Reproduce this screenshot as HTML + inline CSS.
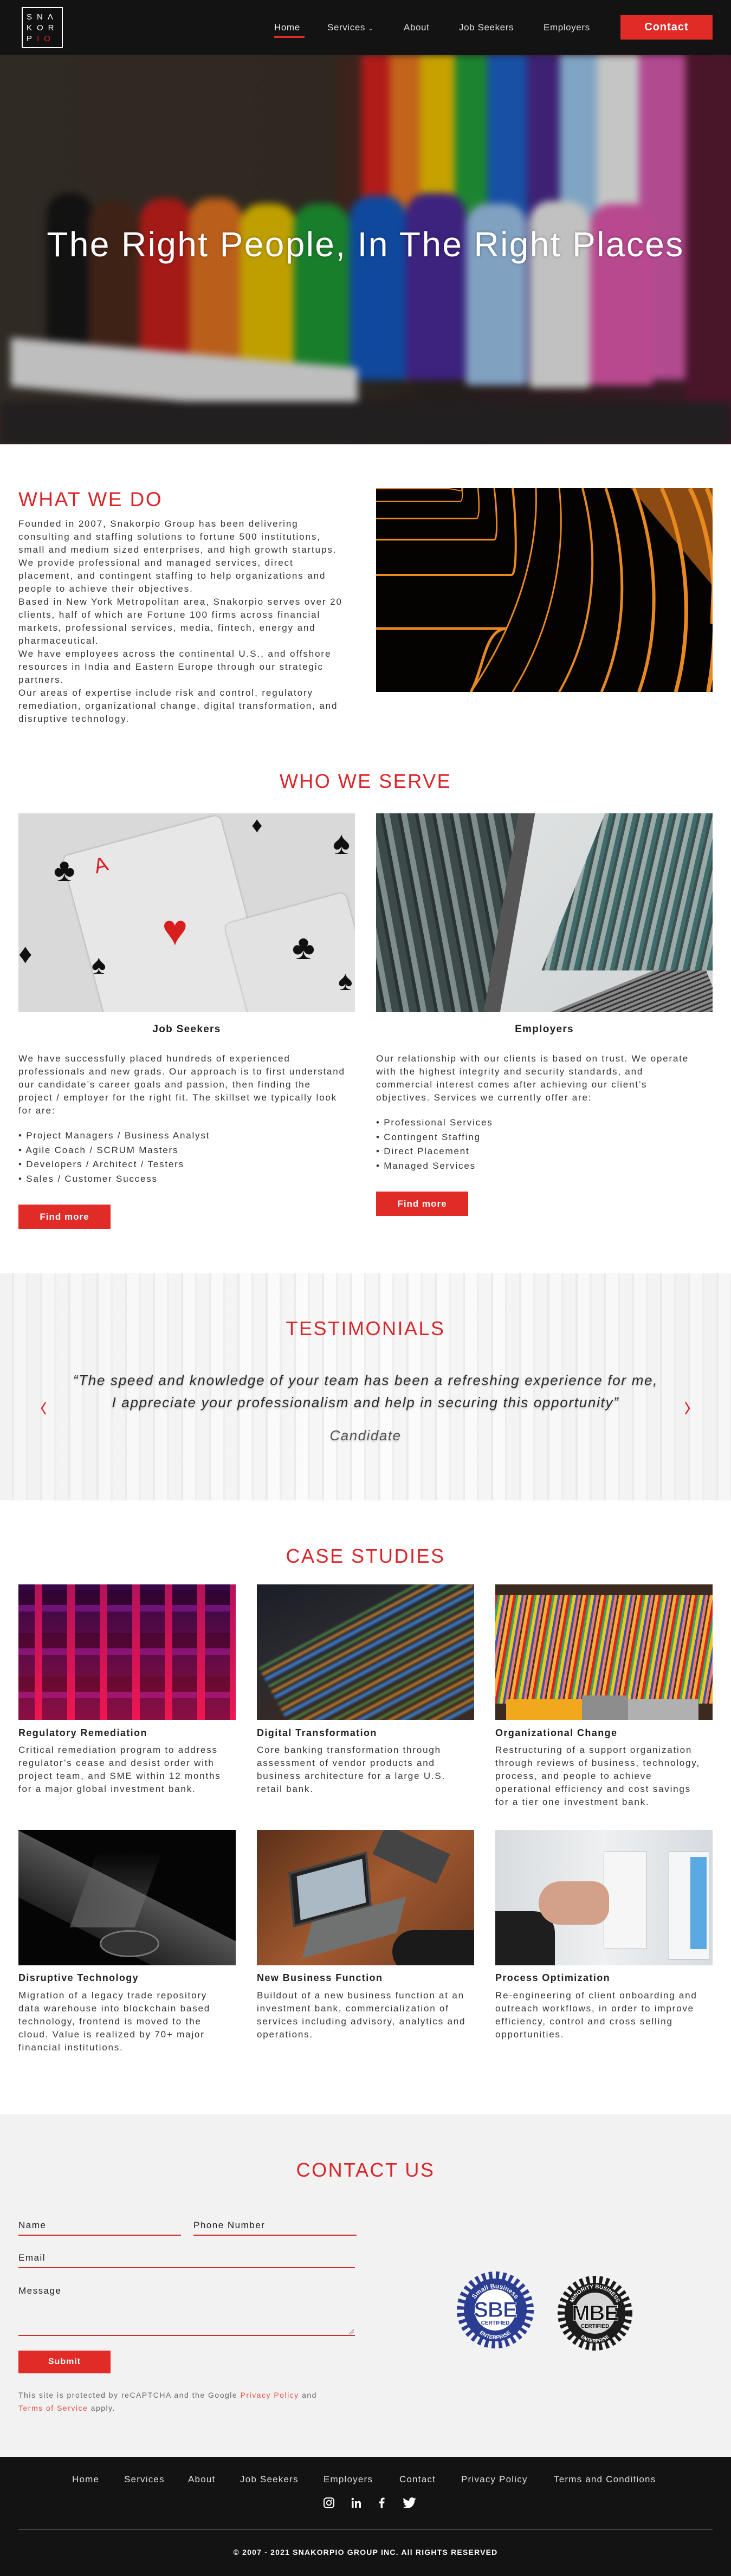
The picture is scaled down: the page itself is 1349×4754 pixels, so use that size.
<!DOCTYPE html>
<html><head><meta charset="utf-8">
<style>
*{margin:0;padding:0;box-sizing:border-box}
html,body{width:1349px;height:4754px;overflow:hidden;background:#fff}
body{position:relative;font-family:"Liberation Sans",Arial,sans-serif;color:#333}
.a{position:absolute}
.nw{white-space:nowrap}
.h2{font-size:36px;letter-spacing:2.5px;color:#d9262a;font-weight:normal;white-space:nowrap}
.txt{font-size:17px;letter-spacing:1.8px;line-height:24px;color:#333;white-space:nowrap}
.btn{background:#e02b27;color:#fff;font-weight:bold;font-size:17px;letter-spacing:1px;text-align:center}
.cs-t{font-size:18px;font-weight:bold;letter-spacing:1.4px;color:#222;white-space:nowrap}
.blur{filter:blur(7px)}
</style></head><body>

<!-- HEADER -->
<div class="a" style="left:0;top:0;width:1349px;height:101px;background:#131313"></div>
<div class="a" style="left:40px;top:13px;width:76px;height:76px;border:2px solid #fff;background:#111"></div>
<div class="a nw" style="left:49px;top:22px;color:#fff;font-size:15px;line-height:20px;letter-spacing:9px">SN<span style="letter-spacing:0">Λ</span><br>KOR<br>P<span style="color:#d9262a">IO</span></div>
<div class="a nw" style="left:506px;top:41px;font-size:17px;color:#eee;letter-spacing:0.6px">Home</div>
<div class="a" style="left:506px;top:66px;width:56px;height:4px;background:#e02b27"></div>
<div class="a nw" style="left:604px;top:41px;font-size:17px;color:#ddd;letter-spacing:0.6px">Services <span style="font-size:11px">&#8964;</span></div>
<div class="a nw" style="left:745px;top:41px;font-size:17px;color:#ddd;letter-spacing:0.6px">About</div>
<div class="a nw" style="left:847px;top:41px;font-size:17px;color:#ddd;letter-spacing:0.6px">Job Seekers</div>
<div class="a nw" style="left:1003px;top:41px;font-size:17px;color:#ddd;letter-spacing:0.6px">Employers</div>
<div class="a btn" style="left:1145px;top:28px;width:170px;height:45px;line-height:45px;font-size:20px">Contact</div>

<!-- HERO -->
<div class="a" style="left:0;top:101px;width:1349px;height:719px;overflow:hidden;background:linear-gradient(90deg,#3b342c 0%,#3a3129 45%,#2c2522 60%,#4a1f2e 100%)">
  <div class="a blur" style="left:0;top:0;width:1349px;height:719px">
    <div class="a" style="left:620px;top:0;width:50px;height:600px;background:#4a2b22"></div>
    <div class="a" style="left:667px;top:0;width:54px;height:600px;background:#d8231f"></div>
    <div class="a" style="left:719px;top:0;width:58px;height:600px;background:#ef7a20"></div>
    <div class="a" style="left:775px;top:0;width:64px;height:600px;background:#f2c500"></div>
    <div class="a" style="left:839px;top:0;width:62px;height:600px;background:#23a23b"></div>
    <div class="a" style="left:899px;top:0;width:74px;height:600px;background:#1d62c9"></div>
    <div class="a" style="left:972px;top:0;width:62px;height:600px;background:#4b2a8e"></div>
    <div class="a" style="left:1033px;top:0;width:70px;height:600px;background:#9cc9ef"></div>
    <div class="a" style="left:1102px;top:0;width:78px;height:600px;background:#f1f1f1"></div>
    <div class="a" style="left:1179px;top:0;width:86px;height:600px;background:#d95bb0"></div>
    <div class="a" style="left:1265px;top:0;width:90px;height:719px;background:#5a1a33"></div>
    <div class="a" style="left:86px;top:255px;width:86px;height:320px;background:#161616;border-radius:40px 40px 6px 6px"></div>
    <div class="a" style="left:163px;top:270px;width:92px;height:310px;background:#4d2a1c;border-radius:40px 40px 6px 6px"></div>
    <div class="a" style="left:258px;top:265px;width:95px;height:320px;background:#c8201c;border-radius:40px 40px 6px 6px"></div>
    <div class="a" style="left:349px;top:265px;width:98px;height:325px;background:#e37420;border-radius:40px 40px 6px 6px"></div>
    <div class="a" style="left:443px;top:275px;width:103px;height:320px;background:#e9c300;border-radius:40px 40px 6px 6px"></div>
    <div class="a" style="left:542px;top:275px;width:103px;height:330px;background:#1f9a35;border-radius:40px 40px 6px 6px"></div>
    <div class="a" style="left:645px;top:260px;width:104px;height:340px;background:#1358c0;border-radius:40px 40px 6px 6px"></div>
    <div class="a" style="left:749px;top:255px;width:111px;height:345px;background:#4b2a9a;border-radius:40px 40px 6px 6px"></div>
    <div class="a" style="left:860px;top:275px;width:112px;height:335px;background:#9ec5ec;border-radius:40px 40px 6px 6px"></div>
    <div class="a" style="left:977px;top:270px;width:112px;height:345px;background:#ececec;border-radius:40px 40px 6px 6px"></div>
    <div class="a" style="left:1089px;top:275px;width:116px;height:335px;background:#e25aae;border-radius:40px 40px 6px 6px"></div>
    <div class="a" style="left:20px;top:550px;width:640px;height:90px;background:#e8e8e8;transform:skewY(5deg)"></div>
    <div class="a" style="left:0;top:640px;width:1349px;height:79px;background:#2a2628"></div>
  </div>
  <div class="a" style="left:0;top:0;width:1349px;height:719px;background:rgba(0,0,0,0.18)"></div>
</div>
<div class="a nw" style="left:0;width:1349px;top:414px;text-align:center;color:#fff;font-size:64px;letter-spacing:2.4px;text-shadow:0 0 6px rgba(0,0,0,0.35)">The Right People, In The Right Places</div>

<!-- WHAT WE DO -->
<div class="a h2" style="left:34px;top:901px;font-size:37px">WHAT WE DO</div>
<div class="a txt" style="left:34px;top:955px;letter-spacing:1.9px">Founded in 2007, Snakorpio Group has been delivering<br>consulting and staffing solutions to fortune 500 institutions,<br>small and medium sized enterprises, and high growth startups.<br>We provide professional and managed services, direct<br>placement, and contingent staffing to help organizations and<br>people to achieve their objectives.<br>Based in New York Metropolitan area, Snakorpio serves over 20<br>clients, half of which are Fortune 100 firms across financial<br>markets, professional services, media, fintech, energy and<br>pharmaceutical.<br>We have employees across the continental U.S., and offshore<br>resources in India and Eastern Europe through our strategic<br>partners.<br>Our areas of expertise include risk and control, regulatory<br>remediation, organizational change, digital transformation, and<br>disruptive technology.</div>
<svg class="a" style="left:694px;top:901px" width="621" height="376" viewBox="0 0 621 376">
<rect width="621" height="376" fill="#050302"/>
<polygon points="470,0 621,0 621,180" fill="#8a4a12"/>
<g fill="none" stroke="#e8891f">
<path d="M0 1 H132 C150 1 160 10 160 0" stroke-width="2"/>
<path d="M0 24 H155 C160 24 160 10 158 0" stroke-width="2"/>
<path d="M0 56 H185 C192 56 190 20 188 0" stroke-width="2.5"/>
<path d="M0 95 H218 C226 95 222 30 218 0" stroke-width="3"/>
<path d="M0 160 H250 C262 160 258 50 252 0" stroke-width="4"/>
<path d="M0 259 H242 C200 259 200 330 175 376" stroke-width="5"/>
<path d="M175 376 C260 250 300 120 295 0" stroke-width="3"/>
<path d="M252 376 C330 250 350 110 338 0" stroke-width="3"/>
<path d="M338 376 C410 250 410 110 381 0" stroke-width="4"/>
<path d="M416 376 C470 250 460 110 424 0" stroke-width="5"/>
<path d="M485 376 C530 250 515 100 476 0" stroke-width="6"/>
<path d="M553 376 C590 240 570 90 527 0" stroke-width="7"/>
<path d="M613 376 C640 230 620 80 579 0" stroke-width="8"/>
<path d="M621 250 C621 150 640 60 610 0" stroke-width="8"/>
</g>
</svg>

<!-- WHO WE SERVE -->
<div class="a h2" style="left:0;width:1349px;text-align:center;top:1421px">WHO WE SERVE</div>
<div class="a" style="left:34px;top:1501px;width:621px;height:367px;overflow:hidden;background:#d9d9d9">
  <div class="a" style="left:125px;top:35px;width:300px;height:380px;background:#e7e7e7;transform:rotate(-15deg);border-radius:12px;box-shadow:0 0 4px #999"></div>
  <div class="a" style="left:415px;top:170px;width:230px;height:300px;background:#e2e2e2;transform:rotate(-15deg);border-radius:12px;box-shadow:0 0 4px #999"></div>
  <div class="a nw" style="left:265px;top:170px;color:#d91e1e;font-size:80px">&#9829;</div>
  <div class="a nw" style="left:140px;top:75px;color:#d91e1e;font-size:38px;transform:rotate(-15deg)">A</div>
  <div class="a nw" style="left:65px;top:70px;color:#111;font-size:60px">&#9827;</div>
  <div class="a nw" style="left:505px;top:210px;color:#111;font-size:64px">&#9827;</div>
  <div class="a nw" style="left:580px;top:20px;color:#111;font-size:60px">&#9824;</div>
  <div class="a nw" style="left:590px;top:280px;color:#111;font-size:50px">&#9824;</div>
  <div class="a nw" style="left:0px;top:230px;color:#111;font-size:50px">&#9830;</div>
  <div class="a nw" style="left:135px;top:250px;color:#111;font-size:50px">&#9824;</div>
  <div class="a nw" style="left:430px;top:0px;color:#111;font-size:40px">&#9830;</div>
</div>
<div class="a" style="left:694px;top:1501px;width:621px;height:367px;overflow:hidden;background:linear-gradient(135deg,#e4e6e6,#cfd3d3)">
  <div class="a" style="left:-40px;top:-20px;width:300px;height:420px;background:repeating-linear-gradient(70deg,#2a3434 0 6px,#7f8c8c 6px 16px,#3d4a4a 16px 30px);transform:skewX(-10deg);border-right:30px solid #555"></div>
  <div class="a" style="left:270px;top:320px;width:400px;height:320px;background:repeating-linear-gradient(0deg,#333 0 3px,#888 3px 8px);transform:rotate(-22deg)"></div>
  <div class="a" style="left:370px;top:-30px;width:330px;height:320px;background:repeating-linear-gradient(80deg,#3e4f4f 0 5px,#9aaaa9 5px 14px,#3f6b6b 14px 22px);transform:skewX(-22deg)"></div>
</div>
<div class="a nw" style="left:34px;width:621px;text-align:center;top:1889px;font-size:19px;font-weight:bold;letter-spacing:1.3px;color:#222">Job Seekers</div>
<div class="a nw" style="left:694px;width:621px;text-align:center;top:1889px;font-size:19px;font-weight:bold;letter-spacing:1.3px;color:#222">Employers</div>
<div class="a txt" style="left:34px;top:1942px">We have successfully placed hundreds of experienced<br>professionals and new grads. Our approach is to first understand<br>our candidate’s career goals and passion, then finding the<br>project / employer for the right fit. The skillset we typically look<br>for are:</div>
<div class="a txt" style="left:34px;top:2083px;line-height:26.5px">• Project Managers / Business Analyst<br>• Agile Coach / SCRUM Masters<br>• Developers / Architect / Testers<br>• Sales / Customer Success</div>
<div class="a btn" style="left:34px;top:2223px;width:170px;height:45px;line-height:45px">Find more</div>
<div class="a txt" style="left:694px;top:1942px">Our relationship with our clients is based on trust. We operate<br>with the highest integrity and security standards, and<br>commercial interest comes after achieving our client’s<br>objectives. Services we currently offer are:</div>
<div class="a txt" style="left:694px;top:2059px;line-height:26.5px">• Professional Services<br>• Contingent Staffing<br>• Direct Placement<br>• Managed Services</div>
<div class="a btn" style="left:694px;top:2199px;width:170px;height:45px;line-height:45px">Find more</div>

<!-- TESTIMONIALS -->
<div class="a" style="left:0;top:2350px;width:1349px;height:419px;background:repeating-linear-gradient(90deg,#f4f4f5 0 22px,#e6e6e8 22px 26px,#fbfbfb 26px 48px,#ebebec 48px 52px);"></div>
<div class="a" style="left:0;top:2350px;width:1349px;height:419px;background:linear-gradient(90deg,rgba(240,240,240,.5),rgba(255,255,255,.2) 50%,rgba(240,240,240,.5))"></div>
<div class="a h2" style="left:0;width:1349px;text-align:center;top:2431px">TESTIMONIALS</div>
<div class="a nw" style="left:0;width:1349px;text-align:center;top:2527px;font-size:26px;font-style:italic;line-height:41px;letter-spacing:1.7px;color:#2a2a2a;text-shadow:0 2px 3px rgba(0,0,0,.25)">“The speed and knowledge of your team has been a refreshing experience for me,<br>I appreciate your professionalism and help in securing this opportunity”</div>
<div class="a nw" style="left:0;width:1349px;text-align:center;top:2634px;font-size:26px;font-style:italic;letter-spacing:1.5px;color:#555;text-shadow:0 2px 3px rgba(0,0,0,.2)">Candidate</div>
<svg class="a" style="left:73px;top:2586px" width="14" height="26"><path d="M11 2 L4 13 L11 24" fill="none" stroke="#d9262a" stroke-width="2.5"/></svg>
<svg class="a" style="left:1262px;top:2586px" width="14" height="26"><path d="M3 2 L10 13 L3 24" fill="none" stroke="#d9262a" stroke-width="2.5"/></svg>

<!-- CASE STUDIES -->
<div class="a h2" style="left:0;width:1349px;text-align:center;top:2851px">CASE STUDIES</div>
<div class="a" style="left:34px;top:2924px;width:401px;height:250px;overflow:hidden;background:#1a0520">
  <div class="a" style="left:0;top:0;width:401px;height:250px;background:repeating-linear-gradient(90deg,transparent 0 30px,#e0195a 30px 44px,transparent 44px 60px),repeating-linear-gradient(0deg,#2a0a40 0 40px,#6a1a8a 40px 52px,#1a0520 52px 80px)"></div>
  <div class="a" style="left:0;top:0;width:401px;height:250px;background:linear-gradient(180deg,rgba(80,0,90,.3),rgba(255,20,70,.45))"></div>
</div>
<div class="a" style="left:474px;top:2924px;width:401px;height:250px;overflow:hidden;background:linear-gradient(160deg,#1b1e26,#2b2a30 40%,#3a2a20 80%)">
  <div class="a" style="left:40px;top:40px;width:420px;height:260px;transform:rotate(-28deg);filter:blur(2px);background:repeating-linear-gradient(0deg,transparent 0 10px,#3a7fd0 10px 16px,transparent 16px 22px,#e1912e 22px 26px,transparent 26px 34px,#5cae4a 34px 37px)"></div>
</div>
<div class="a" style="left:914px;top:2924px;width:401px;height:250px;overflow:hidden;background:#3b2a20">
  <div class="a" style="left:0;top:20px;width:401px;height:200px;background:repeating-linear-gradient(100deg,#d22 0 5px,#2a6 5px 9px,#f4c21a 9px 15px,#35b 15px 19px,#e76 19px 24px,#333 24px 27px,#fa3 27px 33px)"></div>
  <div class="a" style="left:20px;top:212px;width:140px;height:100px;background:#f1a81c;border-radius:0 0 20px 20px"></div>
  <div class="a" style="left:160px;top:205px;width:85px;height:110px;background:#8d8d8d"></div>
  <div class="a" style="left:245px;top:212px;width:130px;height:100px;background:#b0b0b0"></div>
  <div class="a" style="left:0;top:305px;width:401px;height:30px;background:repeating-linear-gradient(0deg,#222 0 2px,#ddd 2px 4px)"></div>
</div>
<div class="a cs-t" style="left:34px;top:3188px">Regulatory Remediation</div>
<div class="a cs-t" style="left:474px;top:3188px">Digital Transformation</div>
<div class="a cs-t" style="left:914px;top:3188px">Organizational Change</div>
<div class="a txt" style="left:34px;top:3218px">Critical remediation program to address<br>regulator’s cease and desist order with<br>project team, and SME within 12 months<br>for a major global investment bank.</div>
<div class="a txt" style="left:474px;top:3218px">Core banking transformation through<br>assessment of vendor products and<br>business architecture for a large U.S.<br>retail bank.</div>
<div class="a txt" style="left:914px;top:3218px">Restructuring of a support organization<br>through reviews of business, technology,<br>process, and people to achieve<br>operational efficiency and cost savings<br>for a tier one investment bank.</div>
<div class="a" style="left:34px;top:3377px;width:401px;height:250px;overflow:hidden;background:#050505">
  <div class="a" style="left:-60px;top:120px;width:560px;height:110px;background:linear-gradient(180deg,#555,#222);transform:rotate(27deg)"></div>
  <div class="a" style="left:120px;top:40px;width:120px;height:140px;background:linear-gradient(180deg,rgba(120,120,120,.0),rgba(130,130,130,.5));transform:skewX(-20deg)"></div>
  <div class="a" style="left:150px;top:185px;width:110px;height:50px;border-radius:50%;border:3px solid #777;background:#333"></div>
</div>
<div class="a" style="left:474px;top:3377px;width:401px;height:250px;overflow:hidden;background:linear-gradient(135deg,#5a3018,#a35a30 50%,#6b3a20)">
  <div class="a" style="left:60px;top:60px;width:150px;height:100px;background:#222;transform:rotate(-15deg) skewX(-10deg);border:4px solid #444"></div>
  <div class="a" style="left:75px;top:70px;width:125px;height:80px;background:#aab9c4;transform:rotate(-15deg) skewX(-10deg)"></div>
  <div class="a" style="left:90px;top:150px;width:180px;height:60px;background:#6f7270;transform:rotate(-15deg) skewX(-30deg)"></div>
  <div class="a" style="left:220px;top:15px;width:130px;height:60px;background:#444;transform:rotate(25deg)"></div>
  <div class="a" style="left:250px;top:185px;width:200px;height:80px;background:#1a1a1a;border-radius:40px"></div>
</div>
<div class="a" style="left:914px;top:3377px;width:401px;height:250px;overflow:hidden;background:linear-gradient(90deg,#d8dcdf,#eef0f1 50%,#d6dbe0)">
  <div class="a" style="left:200px;top:40px;width:80px;height:180px;background:#f6f6f6;border:1px solid #bbb"></div>
  <div class="a" style="left:320px;top:40px;width:75px;height:200px;background:#f4f6f7;border:1px solid #bbb"></div>
  <div class="a" style="left:360px;top:50px;width:30px;height:170px;background:#5aa9e3"></div>
  <div class="a" style="left:0;top:150px;width:110px;height:110px;background:#1e1e1e;border-radius:0 40px 0 0"></div>
  <div class="a" style="left:80px;top:95px;width:130px;height:80px;background:#d3a08a;border-radius:40px 30px 30px 40px"></div>
</div>
<div class="a cs-t" style="left:34px;top:3640px">Disruptive Technology</div>
<div class="a cs-t" style="left:474px;top:3640px">New Business Function</div>
<div class="a cs-t" style="left:914px;top:3640px">Process Optimization</div>
<div class="a txt" style="left:34px;top:3671px">Migration of a legacy trade repository<br>data warehouse into blockchain based<br>technology, frontend is moved to the<br>cloud. Value is realized by 70+ major<br>financial institutions.</div>
<div class="a txt" style="left:474px;top:3671px">Buildout of a new business function at an<br>investment bank, commercialization of<br>services including advisory, analytics and<br>operations.</div>
<div class="a txt" style="left:914px;top:3671px">Re-engineering of client onboarding and<br>outreach workflows, in order to improve<br>efficiency, control and cross selling<br>opportunities.</div>

<!-- CONTACT -->
<div class="a" style="left:0;top:3902px;width:1349px;height:632px;background:#f2f2f2"></div>
<div class="a h2" style="left:0;width:1349px;text-align:center;top:3984px">CONTACT US</div>
<div class="a nw" style="left:34px;top:4097px;font-size:17px;letter-spacing:1.5px;color:#222">Name</div>
<div class="a" style="left:34px;top:4124px;width:300px;height:1.5px;background:#c9302c"></div>
<div class="a nw" style="left:357px;top:4097px;font-size:17px;letter-spacing:1.5px;color:#222">Phone Number</div>
<div class="a" style="left:357px;top:4124px;width:301px;height:1.5px;background:#c9302c"></div>
<div class="a nw" style="left:34px;top:4157px;font-size:17px;letter-spacing:1.5px;color:#222">Email</div>
<div class="a" style="left:34px;top:4184px;width:621px;height:1.5px;background:#c9302c"></div>
<div class="a nw" style="left:34px;top:4218px;font-size:17px;letter-spacing:1.5px;color:#222">Message</div>
<div class="a" style="left:34px;top:4309px;width:621px;height:1.5px;background:#c9302c"></div>
<svg class="a" style="left:642px;top:4298px" width="12" height="10"><path d="M2 10 L11 1 M6 10 L11 5" stroke="#777" stroke-width="1"/></svg>
<div class="a btn" style="left:34px;top:4338px;width:170px;height:42px;line-height:42px;font-size:16px">Submit</div>
<div class="a nw" style="left:34px;top:4408px;font-size:14px;letter-spacing:1.5px;line-height:24px;color:#666">This site is protected by reCAPTCHA and the Google <span style="color:#e0504a">Privacy Policy</span> and<br><span style="color:#e0504a">Terms of Service</span> apply.</div>
<svg class="a" style="left:841px;top:4190px" width="146" height="146" viewBox="-73 -73 146 146">
<circle r="58" fill="#2b3d92"/>
<circle r="64" fill="none" stroke="#2b3d92" stroke-width="14" stroke-dasharray="6.3 6.3"/>
<circle r="38" fill="#fff"/>
<defs><path id="arc1" d="M-45 5 A45 45 0 0 1 45 5"/><path id="arc2" d="M-44 10 A44 44 0 0 0 44 10"/></defs>
<text font-family="Liberation Sans" font-weight="bold" font-size="12" fill="#fff"><textPath href="#arc1" startOffset="50%" text-anchor="middle">Small Business</textPath></text>
<text font-family="Liberation Sans" font-weight="bold" font-size="10" fill="#fff"><textPath href="#arc2" startOffset="50%" text-anchor="middle">ENTERPRISE</textPath></text>
<text y="13" text-anchor="middle" font-family="Liberation Sans" font-weight="bold" font-size="40" fill="#2b3d92" stroke="#fff" stroke-width="1" letter-spacing="-1">SBE</text>
<text y="27" text-anchor="middle" font-family="Liberation Sans" font-weight="bold" font-size="10" fill="#2b3d92">CERTIFIED</text>
</svg>
<svg class="a" style="left:1028px;top:4199px" width="140" height="140" viewBox="-70 -70 140 140">
<circle r="56" fill="#1c1c1c"/>
<circle r="62" fill="none" stroke="#1c1c1c" stroke-width="14" stroke-dasharray="6 6"/>
<circle r="38" fill="#d6d6d6"/>
<defs><path id="arc3" d="M-44 -2 A44 44 0 0 1 44 -2"/><path id="arc4" d="M-42 12 A42 42 0 0 0 42 12"/></defs>
<text font-family="Liberation Sans" font-weight="bold" font-size="10" fill="#fff"><textPath href="#arc3" startOffset="50%" text-anchor="middle">MINORITY BUSINESS</textPath></text>
<text font-family="Liberation Sans" font-weight="bold" font-size="9" fill="#fff"><textPath href="#arc4" startOffset="50%" text-anchor="middle">ENTERPRISE</textPath></text>
<text y="13" text-anchor="middle" font-family="Liberation Sans" font-weight="bold" font-size="40" fill="#111" stroke="#fff" stroke-width="1" letter-spacing="-1">MBE</text>
<text y="27" text-anchor="middle" font-family="Liberation Sans" font-weight="bold" font-size="10" fill="#111">CERTIFIED</text>
</svg>

<!-- FOOTER -->
<div class="a" style="left:0;top:4534px;width:1349px;height:220px;background:#131313"></div>
<div class="a nw" style="left:133px;top:4566px;font-size:17px;letter-spacing:1.2px;color:#ddd">Home</div>
<div class="a nw" style="left:229px;top:4566px;font-size:17px;letter-spacing:1.2px;color:#ddd">Services</div>
<div class="a nw" style="left:347px;top:4566px;font-size:17px;letter-spacing:1.2px;color:#ddd">About</div>
<div class="a nw" style="left:443px;top:4566px;font-size:17px;letter-spacing:1.2px;color:#ddd">Job Seekers</div>
<div class="a nw" style="left:597px;top:4566px;font-size:17px;letter-spacing:1.2px;color:#ddd">Employers</div>
<div class="a nw" style="left:737px;top:4566px;font-size:17px;letter-spacing:1.2px;color:#ddd">Contact</div>
<div class="a nw" style="left:851px;top:4566px;font-size:17px;letter-spacing:1.2px;color:#ddd">Privacy Policy</div>
<div class="a nw" style="left:1022px;top:4566px;font-size:17px;letter-spacing:1.2px;color:#ddd">Terms and Conditions</div>
<svg class="a" style="left:596px;top:4608px" width="22" height="22" viewBox="0 0 22 22"><rect x="2" y="2" width="18" height="18" rx="5" fill="none" stroke="#fff" stroke-width="2"/><circle cx="11" cy="11" r="4.2" fill="none" stroke="#fff" stroke-width="2"/><circle cx="16" cy="6" r="1.2" fill="#fff"/></svg>
<svg class="a" style="left:647px;top:4609px" width="20" height="20" viewBox="0 0 20 20"><rect x="2" y="7" width="3.5" height="12" fill="#fff"/><circle cx="3.8" cy="3" r="2.2" fill="#fff"/><path d="M8 7 H11.3 V9 C12.2 7.3 14 6.7 15.5 6.7 C18 6.7 19 8.5 19 11 V19 H15.6 V11.8 C15.6 10.5 15.1 9.8 14 9.8 C12.6 9.8 11.5 10.7 11.5 12.5 V19 H8 Z" fill="#fff"/></svg>
<svg class="a" style="left:697px;top:4609px" width="14" height="20" viewBox="0 0 14 20"><path d="M9 20 V11 H12 L12.5 7.5 H9 V5.5 C9 4.5 9.3 3.8 10.8 3.8 H12.6 V0.7 C12.3 0.6 11.2 0.5 10 0.5 C7.4 0.5 5.6 2.1 5.6 5 V7.5 H2.6 V11 H5.6 V20 Z" fill="#fff"/></svg>
<svg class="a" style="left:744px;top:4608px" width="24" height="22" viewBox="0 0 24 20"><path d="M23.6 2.3 C22.7 2.7 21.8 3 20.8 3.1 C21.8 2.5 22.6 1.5 23 0.4 C22 1 21 1.4 19.9 1.6 C19 0.6 17.6 0 16.2 0 C13.4 0 11.2 2.3 11.2 5 C11.2 5.4 11.2 5.8 11.3 6.2 C7.1 6 3.4 4 1 0.9 C0.5 1.7 0.3 2.5 0.3 3.5 C0.3 5.2 1.2 6.8 2.5 7.7 C1.7 7.7 0.9 7.4 0.2 7.1 C0.2 9.5 1.9 11.6 4.2 12 C3.8 12.1 3.300 12.2 2.9 12.2 C2.6 12.2 2.2 12.2 1.9 12.1 C2.6 14.1 4.4 15.5 6.6 15.6 C4.9 16.9 2.7 17.7 0.4 17.7 C0.2 17.7 -0.2 17.7 -0.4 17.6 C1.8 19 4.4 19.9 7.3 19.9 C16.2 19.9 21.1 12.4 21.1 5.8 V5.2 C22.1 4.5 22.9 3.5 23.6 2.3 Z" fill="#fff"/></svg>
<div class="a" style="left:34px;top:4668px;width:1281px;height:1px;background:#555"></div>
<div class="a nw" style="left:0;width:1349px;text-align:center;top:4702px;font-size:14px;font-weight:bold;letter-spacing:1.2px;color:#fff">© 2007 - 2021 SNAKORPIO GROUP INC. All RIGHTS RESERVED</div>

</body></html>
